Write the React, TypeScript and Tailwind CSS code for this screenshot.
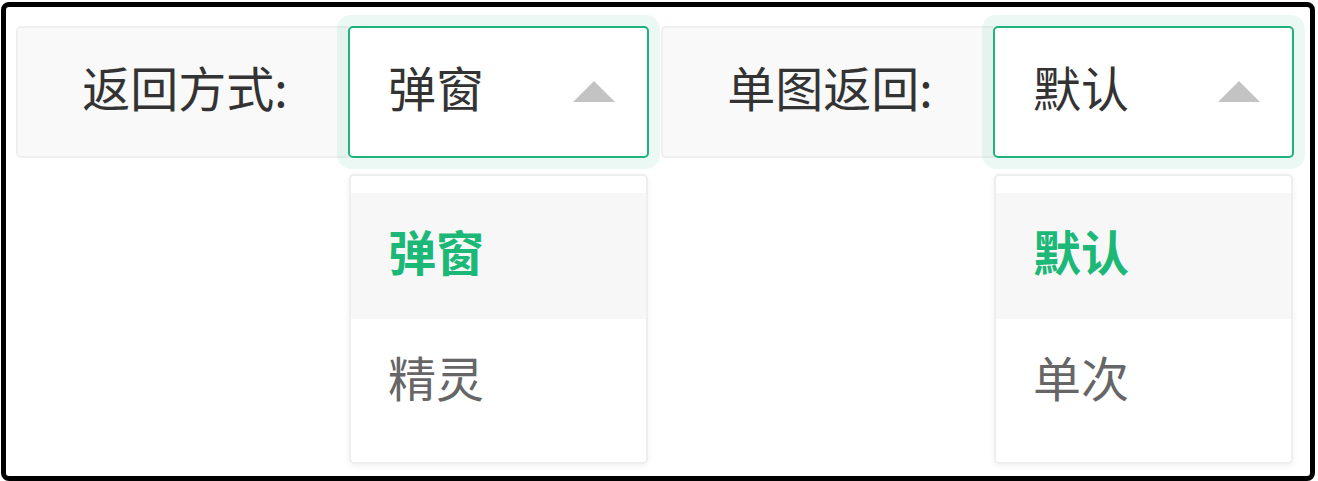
import React from "react";

type Option = { label: string; active?: boolean };

function SelectField({
  label,
  value,
  options,
}: {
  label: string;
  value: string;
  options: Option[];
}) {
  return (
    <div className="flex">
      {/* Label */}
      <div className="w-[332px] h-[132px] flex items-center justify-center bg-[#f9f9f9] border-2 border-r-0 border-[#efefef] rounded-l-[5px]">
        <span className="text-[48px] leading-none text-[#333] pl-[4px] mb-[12px]">{label}</span>
      </div>

      {/* Select */}
      <div className="relative">
        <div className="w-[301px] h-[132px] flex items-center justify-between pl-[38px] pr-[32px] bg-white border-2 border-[#1fb27b] rounded-[5px] shadow-[0_0_0_11px_rgba(29,181,122,0.09)]">
          <span className="text-[48px] leading-none text-[#333] mb-[12px]">{value}</span>
          <span className="w-0 h-0 border-l-[21px] border-r-[21px] border-b-[21px] border-l-transparent border-r-transparent border-b-[#c3c3c3] mb-[2px]" />
        </div>

        {/* Menu */}
        <div className="absolute left-[1px] top-[148px] w-[299px] py-[17px] bg-white border-2 border-[#eeeeee] rounded-[5px] shadow-[0_2px_6px_rgba(0,0,0,0.06)]">
          {options.map((o) => (
            <div
              key={o.label}
              className={
                o.active
                  ? "h-[126px] flex items-center pl-[37px] bg-[#f7f7f7] text-[#1bb877] font-bold"
                  : "h-[126px] flex items-center pl-[37px] text-[#666]"
              }
            >
              <span className="text-[48px] leading-none mb-[12px]">{o.label}</span>
            </div>
          ))}
        </div>
      </div>
    </div>
  );
}

export default function App() {
  return (
    <div className="w-[1318px] h-[481px] bg-white font-['Noto_Sans_CJK_SC',sans-serif]">
      <div className="ml-[1px] mt-[2px] w-[1314px] h-[479px] border-[5px] border-black rounded-[8px] overflow-hidden pl-[10px] pt-[19px]">
        <div className="flex gap-[12px]">
          <SelectField
            label="返回方式:"
            value="弹窗"
            options={[{ label: "弹窗", active: true }, { label: "精灵" }]}
          />
          <SelectField
            label="单图返回:"
            value="默认"
            options={[{ label: "默认", active: true }, { label: "单次" }]}
          />
        </div>
      </div>
    </div>
  );
}
